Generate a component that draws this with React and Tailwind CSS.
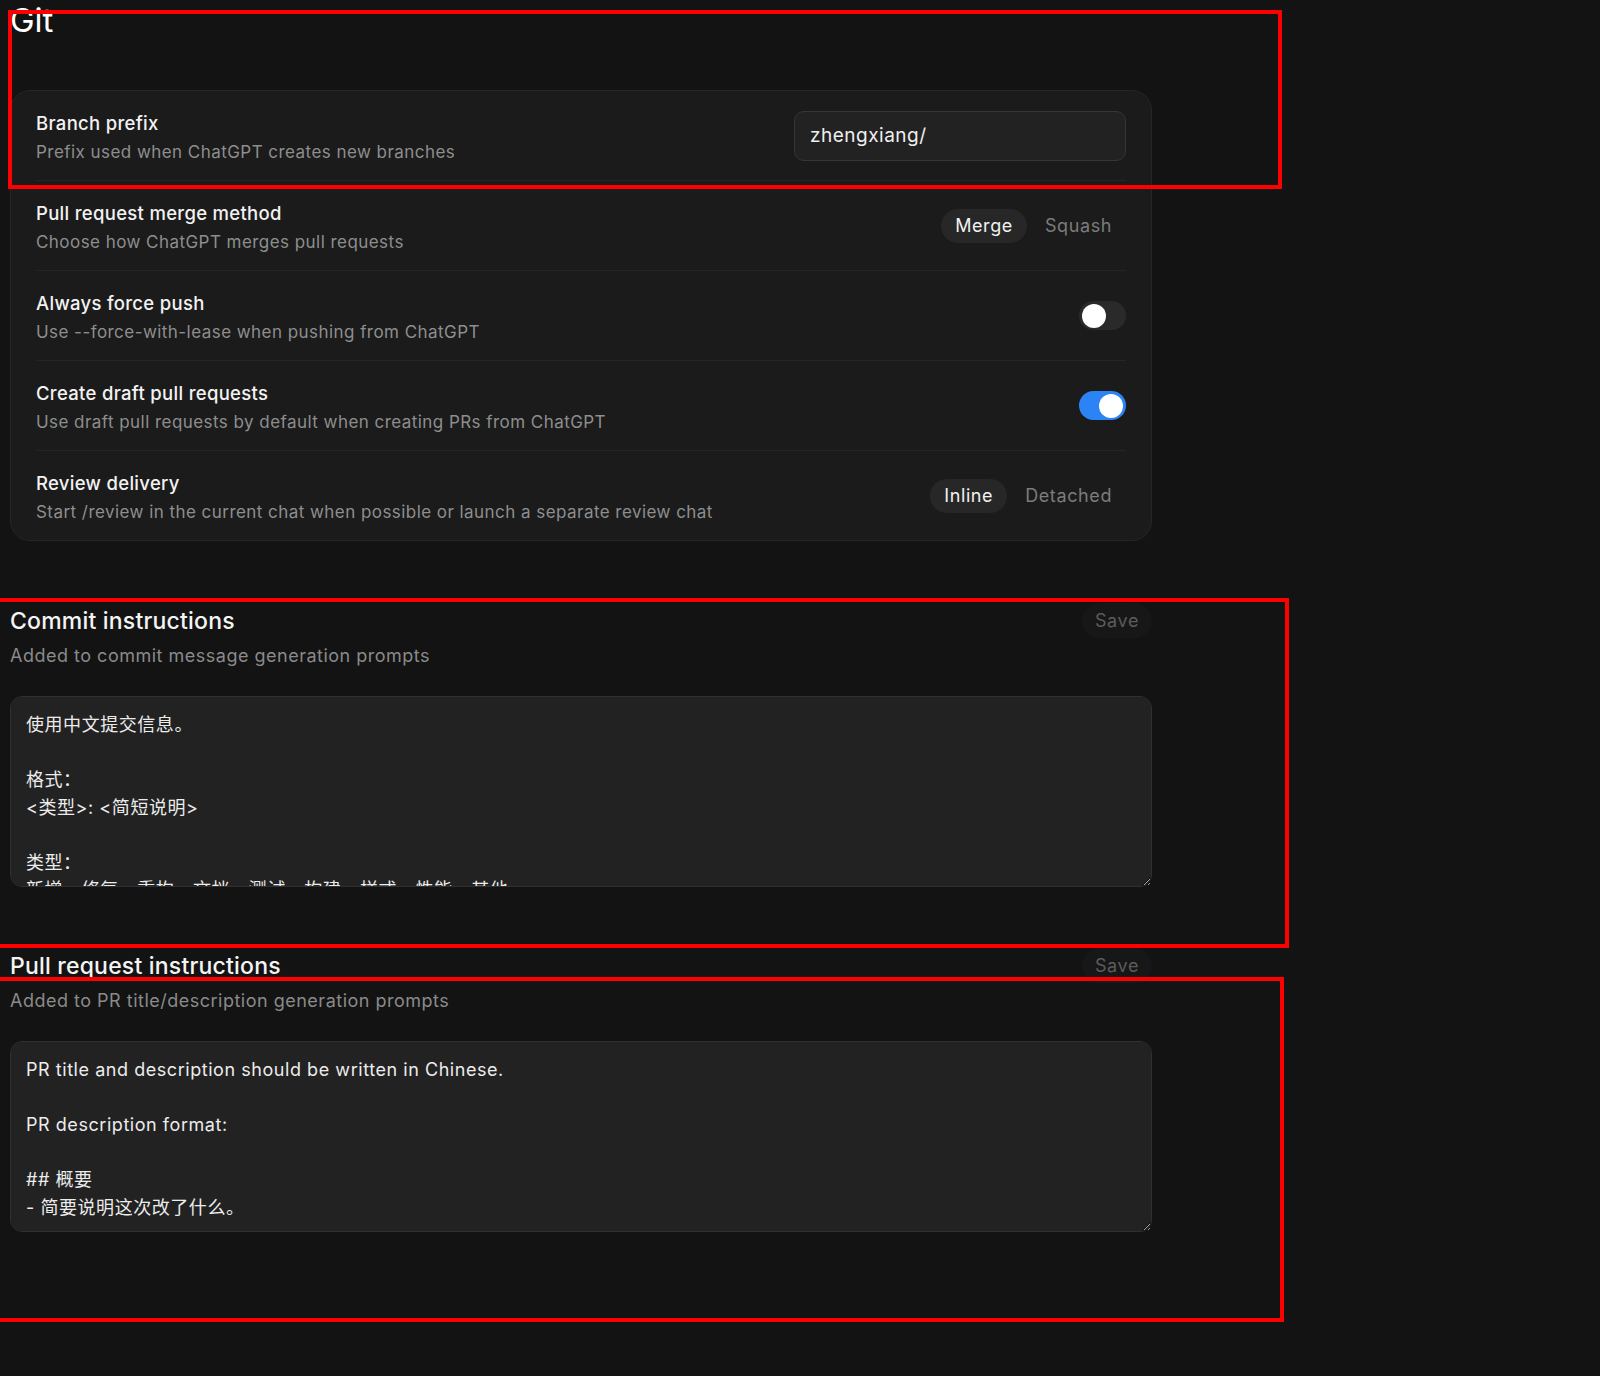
import { useState } from 'react'

const commitText = `使用中文提交信息。

格式：
<类型>: <简短说明>

类型：
新增、修复、重构、文档、测试、构建、样式、性能、其他

示例：
新增: 支持分支前缀配置`

const prText = `PR title and description should be written in Chinese.

PR description format:

## 概要
- 简要说明这次改了什么。

## 变更
- 列出主要改动。`

function Row({ title, desc, children, last }) {
  return (
    <div className={`flex items-center justify-between pt-[19px] pb-[16px] ${last ? '' : 'border-b border-[#252525]'}`}>
      <div className="flex flex-col gap-[4px]">
        <div className="text-[18.5px] leading-[26px] tracking-[0.3px] font-medium text-[#f2f2f2]">{title}</div>
        <div className="text-[17px] leading-[24px] tracking-[0.45px] text-[#8e8e8e]">{desc}</div>
      </div>
      <div className="mt-[-3px]">{children}</div>
    </div>
  )
}

function Segmented({ options, value }) {
  return (
    <div className="flex items-center gap-[4px]">
      {options.map((o) => (
        <div
          key={o}
          className={`h-[34px] px-[14px] flex items-center rounded-full text-[18px] tracking-[0.6px] ${
            o === value ? 'bg-[#272727] text-[#f2f2f2]' : 'text-[#7c7c7c]'
          }`}
        >
          {o}
        </div>
      ))}
    </div>
  )
}

function Toggle({ on }) {
  return (
    <div
      className={`w-[47px] h-[29px] rounded-full p-[3px] flex items-center ${
        on ? 'bg-[#2b83f6] justify-end' : 'bg-[#2a2a2a] justify-start'
      }`}
    >
      <div className="w-[24px] h-[24px] rounded-full bg-white" />
    </div>
  )
}

function Instructions({ title, desc, text }) {
  return (
    <div className="flex flex-col">
      <div className="flex items-center justify-between">
        <h2 className="text-[23px] leading-[30px] tracking-[0.2px] font-medium text-[#f4f4f4]">{title}</h2>
        <button className="h-[35px] px-[13px] rounded-full bg-[#171717] text-[18px] tracking-[0.6px] text-[#5c5c5c]">
          Save
        </button>
      </div>
      <p className="mt-[5px] text-[18px] leading-[26px] tracking-[0.5px] text-[#8a8a8a]">{desc}</p>
      <textarea
        defaultValue={text}
        className="mt-[27px] h-[191px] w-full rounded-[12px] border border-[#303030] bg-[#222222] px-[15px] py-[14px] text-[18px] leading-[27.5px] tracking-[0.55px] text-[#ececec] outline-none [color-scheme:dark] [scrollbar-width:none]"
      />
    </div>
  )
}

export default function App() {
  const [prefix] = useState('zhengxiang/')
  return (
    <div
      className="relative min-h-[1376px] w-full bg-[#131313] overflow-hidden"
      style={{ fontFamily: 'Inter, "Noto Sans CJK SC", sans-serif' }}
    >
      <div className="w-[1152px] pl-[10px]">
        <h1 className="mt-[0px] text-[33px] leading-[40px] font-normal text-white">Git</h1>

        <div className="mt-[50px] rounded-[20px] border border-[#262626] bg-[#1b1b1b] px-[25px]">
          <Row title="Branch prefix" desc="Prefix used when ChatGPT creates new branches">
            <input
              defaultValue={prefix}
              className="w-[332px] h-[50px] rounded-[10px] border border-[#363636] bg-[#222222] px-[15px] text-[19px] tracking-[0.5px] text-[#f0f0f0] outline-none"
            />
          </Row>
          <Row title="Pull request merge method" desc="Choose how ChatGPT merges pull requests">
            <Segmented options={['Merge', 'Squash']} value="Merge" />
          </Row>
          <Row title="Always force push" desc="Use --force-with-lease when pushing from ChatGPT">
            <Toggle on={false} />
          </Row>
          <Row title="Create draft pull requests" desc="Use draft pull requests by default when creating PRs from ChatGPT">
            <Toggle on />
          </Row>
          <Row
            last
            title="Review delivery"
            desc="Start /review in the current chat when possible or launch a separate review chat"
          >
            <Segmented options={['Inline', 'Detached']} value="Inline" />
          </Row>
        </div>

        <div className="mt-[62px] flex flex-col gap-[61px]">
          <Instructions
            title="Commit instructions"
            desc="Added to commit message generation prompts"
            text={commitText}
          />
          <Instructions
            title="Pull request instructions"
            desc="Added to PR title/description generation prompts"
            text={prText}
          />
        </div>
      </div>

      {/* annotation boxes */}
      <div className="pointer-events-none absolute left-[8px] top-[10px] w-[1274px] h-[179px] border-[4px] border-[#ff0000]" />
      <div className="pointer-events-none absolute left-[-4px] top-[598px] w-[1293px] h-[350px] border-[4px] border-[#ff0000]" />
      <div className="pointer-events-none absolute left-[-4px] top-[977px] w-[1288px] h-[345px] border-[4px] border-[#ff0000]" />
    </div>
  )
}
